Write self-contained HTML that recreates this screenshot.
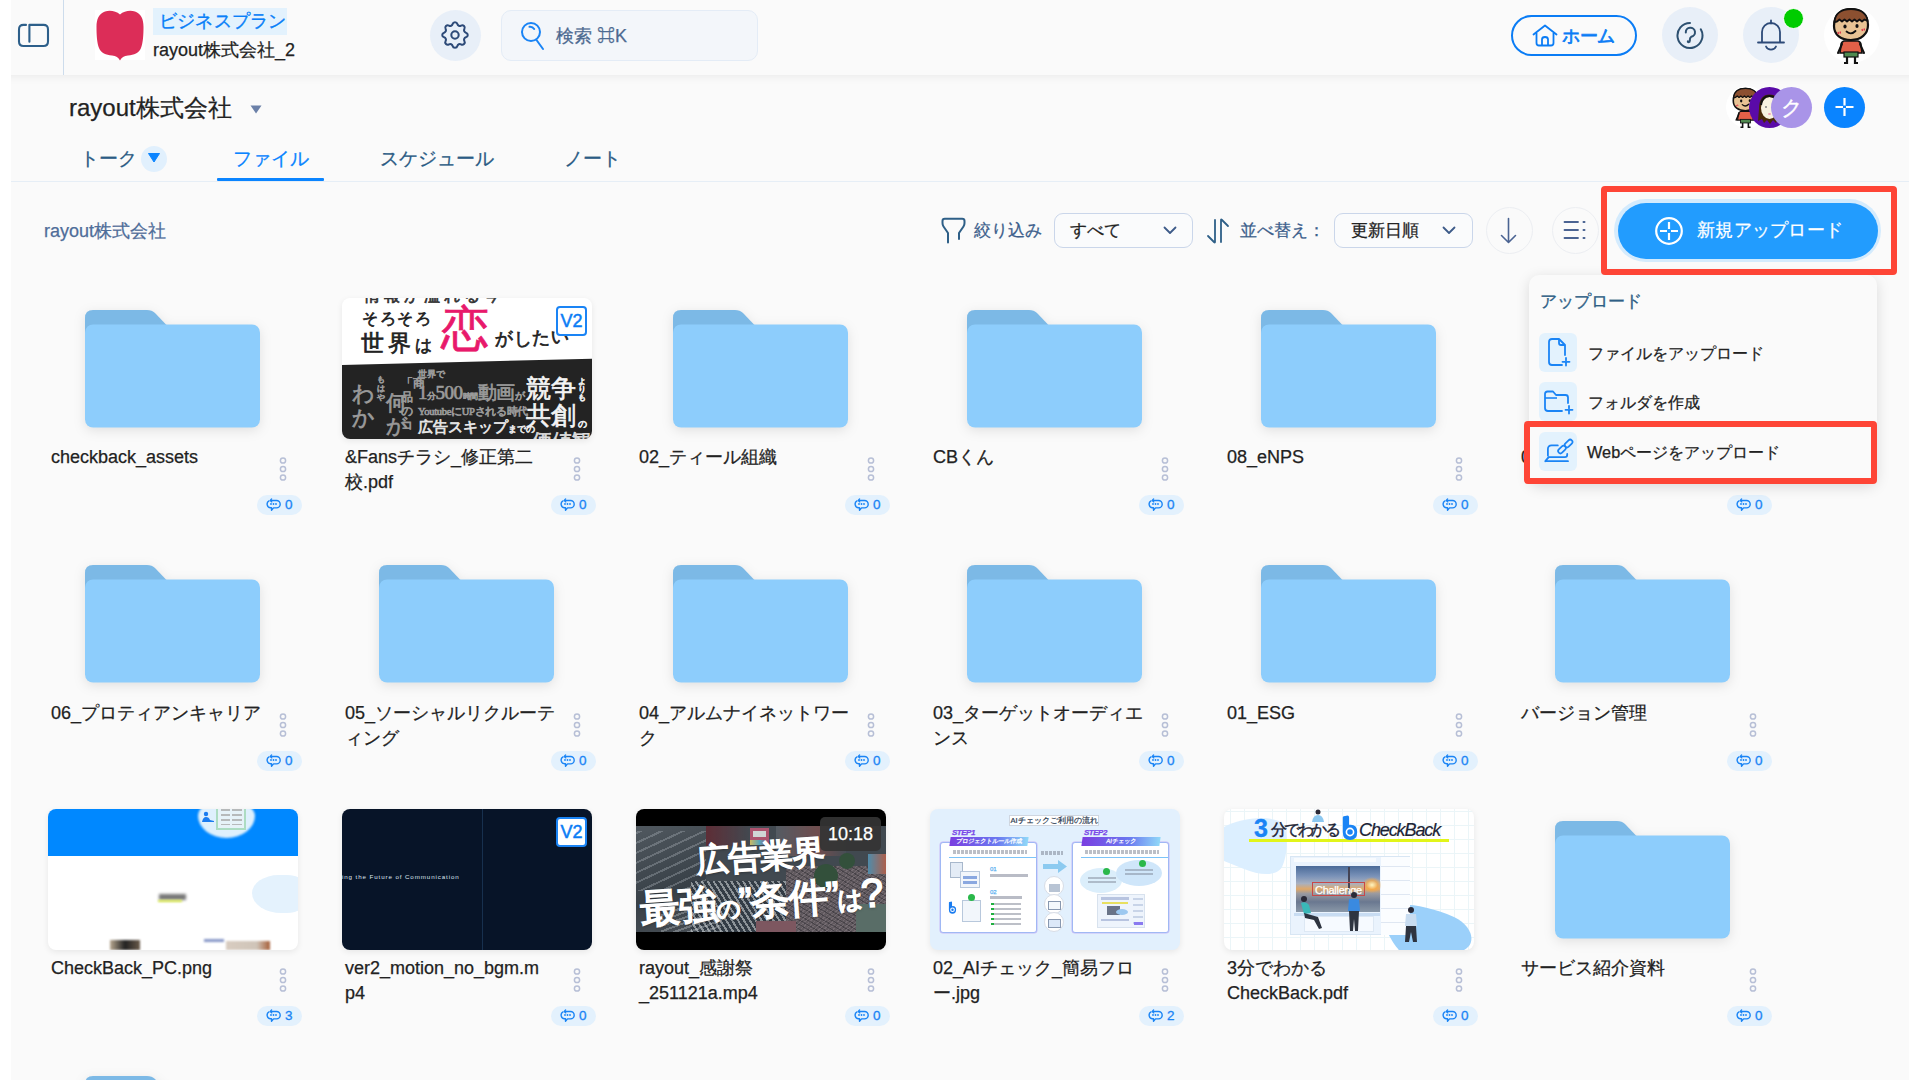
<!DOCTYPE html><html lang="ja"><head><meta charset="utf-8"><title>files</title><style>
*{box-sizing:border-box;margin:0;padding:0}
html,body{width:1920px;height:1080px;overflow:hidden;background:#fff}
body{font-family:"Liberation Sans",sans-serif;color:#222;position:relative;-webkit-text-stroke:0.25px currentColor}
.app{position:absolute;left:0;top:0;width:1920px;height:1080px;background:#fafafa;overflow:hidden}
.edge{position:absolute;top:0;width:11px;height:1080px;background:#fff;z-index:100}
.abs{position:absolute}
.hdr{position:absolute;left:0;top:0;width:1920px;height:75px;background:#fafafa;box-shadow:0 1px 0 #f0f0f0,0 3px 8px rgba(0,0,0,.05);z-index:2}
.fold{position:absolute;filter:drop-shadow(0 3px 6px rgba(0,0,0,.10))}
.th{position:absolute;width:250px;height:141px;border-radius:8px;overflow:hidden;box-shadow:0 2px 6px rgba(0,0,0,.08)}
.ttl{position:absolute;font-size:18px;line-height:25px;color:#222;white-space:nowrap}
.keb{position:absolute}
.bdg{position:absolute;width:45px;height:20px;border-radius:10px;background:#e3f1fd;display:flex;align-items:center;padding-left:9px;gap:4px}
.bdg svg{display:block}
.bdg span{font-size:13.5px;color:#1a84f5;line-height:20px;-webkit-text-stroke:0.3px #1a84f5}
.v2{position:absolute;right:5px;top:8px;width:31px;height:30px;background:#fff;border:2px solid #1a84f5;border-radius:4px;color:#0a7cf5;font-size:18px;line-height:26px;text-align:center;-webkit-text-stroke:0.5px #0a7cf5}
.fj{position:absolute;white-space:nowrap;color:#222;line-height:1.1;-webkit-text-stroke:0.7px currentColor}
.vt{position:absolute;white-space:nowrap;color:#fff;line-height:1;transform:rotate(-4deg);transform-origin:0 50%;-webkit-text-stroke:1.6px #fff;text-shadow:0 1px 3px rgba(0,0,0,.5)}
.g{color:#9a9a9a}
.aip{position:absolute;width:97px;height:91px;background:#fff;border:1.5px solid #a0b8f4;border-radius:3px;box-shadow:0 0 0 0.5px #c8b8f8}
.aic{position:absolute;left:114px;width:20px;height:20px;border-radius:50%;background:#fff;border:1px solid #d8dde6}
.menu{position:absolute;left:1518px;top:275px;width:348px;height:210px;background:#fafafa;border-radius:10px;box-shadow:0 4px 16px rgba(0,0,0,.12);z-index:5}
.mi{position:absolute;left:10px;width:38px;height:39px;border-radius:6px;background:#e3f2fd}
.mt{position:absolute;left:59px;font-size:16.5px;color:#222;white-space:nowrap;line-height:20px}
.red{position:absolute;border:6px solid #fe4536;border-radius:4px;z-index:6}
</style></head><body><div class="app">
<div class="hdr">
<svg class="abs" style="left:17px;top:23px" width="33" height="25" viewBox="0 0 33 25"><path d="M9 1.9 H6.5 Q2 1.9 2 6.4 V18.5 Q2 23 6.5 23 H26.5 Q31 23 31 18.5 V6.4 Q31 1.9 26.5 1.9 H12.4 V18.8" fill="none" stroke="#2d5f8a" stroke-width="2.1" stroke-linecap="round" stroke-linejoin="round"/></svg>
<div class="abs" style="left:63px;top:0;width:1px;height:75px;background:#cddcec"></div>
<div class="abs" style="left:95px;top:10px;width:50px;height:50px;background:#fff"></div>
<svg class="abs" style="left:95px;top:10px" width="50" height="51" viewBox="0 0 50 51"><path d="M25 4.5 C29 1 35 0 40 1.5 C46 3.5 48.5 9 48.5 17 C48.5 25 48 33 46 38 C44 43 39 45 33 45.5 C29 46 26.5 47.5 25 50.5 C23.5 47.5 21 46 17 45.5 C11 45 6 43 4 38 C2 33 1.5 25 1.5 17 C1.5 9 4 3.5 10 1.5 C15 0 21 1 25 4.5 Z" fill="#dc2d58"/></svg>
<div class="abs" style="left:153px;top:7.5px;width:134px;height:27.5px;background:#e3f2fd"></div>
<div class="abs" style="left:159px;top:9px;font-size:17.5px;line-height:24px;color:#0a80f8;letter-spacing:0.2px;-webkit-text-stroke:0.35px #0a80f8">ビジネスプラン</div>
<div class="abs" style="left:153px;top:38px;font-size:18px;line-height:24px;color:#222">rayout株式会社_2</div>
<div class="abs" style="left:430px;top:10px;width:51px;height:51px;border-radius:50%;background:#e8eff8"></div>
<svg class="abs" style="left:438px;top:18px" width="34" height="34" viewBox="0 0 24 24"><path d="M10.325 4.317c.426-1.756 2.924-1.756 3.35 0a1.724 1.724 0 0 0 2.573 1.066c1.543-.94 3.31.826 2.37 2.37a1.724 1.724 0 0 0 1.065 2.572c1.756.426 1.756 2.924 0 3.35a1.724 1.724 0 0 0-1.066 2.573c.94 1.543-.826 3.31-2.37 2.37a1.724 1.724 0 0 0-2.572 1.065c-.426 1.756-2.924 1.756-3.35 0a1.724 1.724 0 0 0-2.573-1.066c-1.543.94-3.31-.826-2.37-2.37a1.724 1.724 0 0 0-1.065-2.572c-1.756-.426-1.756-2.924 0-3.35a1.724 1.724 0 0 0 1.066-2.573c-.94-1.543.826-3.31 2.37-2.37c1 .608 2.296.07 2.572-1.065z" fill="none" stroke="#2d4a78" stroke-width="1.45" stroke-linejoin="round"/><circle cx="12" cy="12" r="2.6" fill="none" stroke="#2d4a78" stroke-width="1.45"/></svg>
<div class="abs" style="left:501px;top:10px;width:257px;height:51px;border-radius:10px;background:#f3f6fa;border:1px solid #e4ecf6"></div>
<svg class="abs" style="left:520px;top:21px" width="26" height="30" viewBox="0 0 26 30"><circle cx="11" cy="11" r="9" fill="none" stroke="#1a84f5" stroke-width="2"/><path d="M9.5 5.8 A5 5 0 0 1 14.2 8" fill="none" stroke="#1a84f5" stroke-width="2" stroke-linecap="round"/><line x1="16.5" y1="19" x2="23" y2="28" stroke="#1a84f5" stroke-width="2" stroke-linecap="round"/></svg>
<div class="abs" style="left:556px;top:24px;font-size:18px;line-height:24px;color:#4d6a91">検索 ⌘K</div>
<div class="abs" style="left:1511px;top:15px;width:126px;height:41px;border-radius:21px;border:2.5px solid #0a7cf5"></div>
<svg class="abs" style="left:1532px;top:24px" width="26" height="23" viewBox="0 0 26 23"><path d="M1.5 10.5 L13 1.5 L24.5 10.5" fill="none" stroke="#0a7cf5" stroke-width="1.8" stroke-linecap="round" stroke-linejoin="round"/><path d="M4.5 9 V19 Q4.5 21.5 7 21.5 H19 Q21.5 21.5 21.5 19 V9" fill="none" stroke="#0a7cf5" stroke-width="1.8"/><path d="M10 21.5 V15.5 Q10 13 13 13 Q16 13 16 15.5 V21.5" fill="none" stroke="#0a7cf5" stroke-width="1.8"/></svg>
<div class="abs" style="left:1562px;top:24px;font-size:18px;line-height:24px;color:#0a7cf5;letter-spacing:-0.3px;-webkit-text-stroke:0.7px #0a7cf5">ホーム</div>
<div class="abs" style="left:1662px;top:7px;width:56px;height:56px;border-radius:50%;background:#e8eff8"></div>
<svg class="abs" style="left:1675px;top:21px" width="30" height="29" viewBox="0 0 30 29"><path d="M25.8 8.25 A12.5 12.5 0 1 1 15 2" fill="none" stroke="#2d5070" stroke-width="2" stroke-linecap="round"/><path d="M10.8 11.5 A4.6 4.6 0 1 1 16.2 15.8 Q14.9 16.6 14.9 18.3 V19.6 Q14.9 21.2 13.6 21.2 Q12.6 21.2 12.9 20.2" fill="none" stroke="#2d5070" stroke-width="2" stroke-linecap="round" stroke-linejoin="round"/></svg>
<div class="abs" style="left:1743px;top:7px;width:56px;height:56px;border-radius:50%;background:#e8eff8"></div>
<svg class="abs" style="left:1756px;top:19px" width="30" height="33" viewBox="0 0 30 33"><line x1="15" y1="1.5" x2="15" y2="4.5" stroke="#2d4a78" stroke-width="1.8" stroke-linecap="round"/><path d="M6 23 V13 A9 9 0 0 1 24 13 V23" fill="none" stroke="#2d4a78" stroke-width="1.8"/><line x1="2" y1="23.5" x2="28" y2="23.5" stroke="#2d4a78" stroke-width="1.8" stroke-linecap="round"/><path d="M10 27.5 A5.5 5.5 0 0 0 20 27.5" fill="none" stroke="#2d4a78" stroke-width="1.8" stroke-linecap="round"/></svg>
<div class="abs" style="left:1783px;top:8px;width:21px;height:21px;border-radius:50%;background:#00cc00;border:1px solid #fff"></div>
<div class="abs" style="left:1824px;top:7px;width:56px;height:56px;border-radius:50%;background:#fff"></div>
<svg class="abs" style="left:1831px;top:7px" width="40" height="57" viewBox="0 0 40 57"><path d="M3 19 C3 8 10 2 20 2 C30 2 37 8 37 18 C37 27 30 33 20 33 C10 33 3 28 3 19 Z" fill="#e8c394" stroke="#111" stroke-width="2.2"/><path d="M3.5 15 C4 6 11 2 20 2 C29 2 36 6 36.5 14 L33.5 12.5 L31 14.5 L28.5 12.5 L26 14.5 L23.5 12.5 L21 14.5 L18.5 12.5 L16 14.5 L13.5 12.5 L11 14.5 L8.5 12.5 L6 14.5 Z" fill="#8c5030" stroke="#111" stroke-width="1.8" stroke-linejoin="round"/><ellipse cx="14" cy="19.5" rx="1.6" ry="2" fill="#111"/><ellipse cx="26" cy="19" rx="1.6" ry="2" fill="#111"/><path d="M15.5 24.5 Q20 28.5 24.5 24" fill="none" stroke="#111" stroke-width="1.8" stroke-linecap="round"/><path d="M7 25 L7.5 27 M9 24.5 L9.5 26.5 M31 22 L31.5 24 M33 21.5 L33.5 23.5" stroke="#e03048" stroke-width="1.3"/><path d="M13 34 H27 Q30 35 30 38 L31 46 H9 L10 38 Q10 35 13 34 Z" fill="#e26048" stroke="#111" stroke-width="1.6"/><path d="M11 37 L7 46 M29 37 L33 46" stroke="#111" stroke-width="2" stroke-linecap="round"/><rect x="13" y="45" width="14" height="5" fill="#4f8a50" stroke="#111" stroke-width="1.2"/><path d="M16 50 V56 H13 M24 50 V56 H27" fill="none" stroke="#111" stroke-width="2.2"/></svg>
</div>

<div class="abs" style="left:69px;top:93px;font-size:24px;line-height:30px;color:#222">rayout株式会社</div>
<svg class="abs" style="left:250px;top:105px" width="12" height="9" viewBox="0 0 12 9"><path d="M0.5 0.5 H11.5 L6 8.5 Z" fill="#6b80a8"/></svg>
<div class="abs" style="left:1726px;top:86px;width:42px;height:42px;border-radius:50%;background:#fff"></div>
<svg class="abs" style="left:1731px;top:87px" width="29" height="41" viewBox="0 0 40 57"><path d="M3 19 C3 8 10 2 20 2 C30 2 37 8 37 18 C37 27 30 33 20 33 C10 33 3 28 3 19 Z" fill="#e8c394" stroke="#111" stroke-width="2.2"/><path d="M3.5 15 C4 6 11 2 20 2 C29 2 36 6 36.5 14 L33.5 12.5 L31 14.5 L28.5 12.5 L26 14.5 L23.5 12.5 L21 14.5 L18.5 12.5 L16 14.5 L13.5 12.5 L11 14.5 L8.5 12.5 L6 14.5 Z" fill="#8c5030" stroke="#111" stroke-width="1.8" stroke-linejoin="round"/><ellipse cx="14" cy="19.5" rx="1.6" ry="2" fill="#111"/><ellipse cx="26" cy="19" rx="1.6" ry="2" fill="#111"/><path d="M15.5 24.5 Q20 28.5 24.5 24" fill="none" stroke="#111" stroke-width="1.8" stroke-linecap="round"/><path d="M7 25 L7.5 27 M9 24.5 L9.5 26.5 M31 22 L31.5 24 M33 21.5 L33.5 23.5" stroke="#e03048" stroke-width="1.3"/><path d="M13 34 H27 Q30 35 30 38 L31 46 H9 L10 38 Q10 35 13 34 Z" fill="#e26048" stroke="#111" stroke-width="1.6"/><path d="M11 37 L7 46 M29 37 L33 46" stroke="#111" stroke-width="2" stroke-linecap="round"/><rect x="13" y="45" width="14" height="5" fill="#4f8a50" stroke="#111" stroke-width="1.2"/><path d="M16 50 V56 H13 M24 50 V56 H27" fill="none" stroke="#111" stroke-width="2.2"/></svg>
<svg class="abs" style="left:1749px;top:87px" width="41" height="41" viewBox="0 0 41 41"><circle cx="20.5" cy="20.5" r="20.5" fill="#5a0aa8"/><path d="M9 34 L10 22 C10 12 14 7.5 20.5 7.5 C27 7.5 31 12 31 22 L32 34 L29 32 L27 36 L24 33 L21 37 L18 33 L15 36 L13 32 Z" fill="#4a2a08"/><ellipse cx="20.5" cy="21" rx="8.5" ry="11" fill="#f8f2e0"/><path d="M12 18 C13 11 17 9 20.5 9 C25 9 28 12 29 17" fill="none" stroke="#111" stroke-width="2"/><circle cx="17" cy="20" r="0.9" fill="#777"/><circle cx="24" cy="20" r="0.9" fill="#777"/><ellipse cx="20.5" cy="27" rx="1.5" ry="1" fill="#f0a0b0"/></svg>
<div class="abs" style="left:1771px;top:87px;width:41px;height:41px;border-radius:50%;background:#a994e8;color:#fff;font-size:21px;line-height:41px;text-align:center;-webkit-text-stroke:0.4px #fff">ク</div>
<div class="abs" style="left:1824px;top:87px;width:41px;height:41px;border-radius:50%;background:#0a84ff"></div>
<svg class="abs" style="left:1834px;top:97px" width="21" height="21" viewBox="0 0 21 21"><path d="M10.5 1 V8.5 M10.5 11 V19 M1.5 10 H9 M12 10 H19.5" stroke="#fff" stroke-width="2.2"/></svg>
<div class="abs" style="left:80px;top:146.5px;font-size:19px;line-height:24px;color:#2b5b84">トーク</div>
<div class="abs" style="left:141px;top:145.5px;width:26px;height:26px;border-radius:50%;background:#e1f0fd"></div>
<svg class="abs" style="left:148px;top:153px" width="12" height="10" viewBox="0 0 12 10"><path d="M0.5 0.5 H11.5 L6 9 Z" fill="#0a84ff" stroke="#0a84ff" stroke-linejoin="round"/></svg>
<div class="abs" style="left:233px;top:146.5px;font-size:19px;line-height:24px;color:#0a84ff">ファイル</div>
<div class="abs" style="left:380px;top:146.5px;font-size:19px;line-height:24px;color:#2b5b84">スケジュール</div>
<div class="abs" style="left:564px;top:146.5px;font-size:19px;line-height:24px;color:#2b5b84">ノート</div>
<div class="abs" style="left:11px;top:181px;width:1898px;height:1px;background:#e6eef6"></div>
<div class="abs" style="left:217px;top:178px;width:107px;height:3px;background:#0a84ff;border-radius:1px"></div>
<div class="abs" style="left:44px;top:219px;font-size:18px;line-height:24px;color:#4f6d99">rayout株式会社</div>
<svg class="abs" style="left:941px;top:217px" width="25" height="27" viewBox="0 0 25 27"><path d="M7 25.5 V16 L2.5 9.5 Q1.5 8 1.5 6 V4 Q1.5 1.8 3.8 1.8 H21.2 Q23.5 1.8 23.5 4 V6 Q23.5 8 22.5 9.5 L18 16 V22" fill="none" stroke="#2e5f87" stroke-width="2" stroke-linecap="round" stroke-linejoin="round"/></svg>
<div class="abs" style="left:974px;top:219px;font-size:17px;line-height:24px;color:#3d5f8c">絞り込み</div>
<div class="abs" style="left:1054px;top:213px;width:139px;height:35px;border-radius:9px;border:1.2px solid #cad6ea;background:#fafbfc"></div>
<div class="abs" style="left:1070px;top:219px;font-size:17px;line-height:24px;color:#222">すべて</div>
<svg class="abs" style="left:1163px;top:226px" width="14" height="9" viewBox="0 0 14 9"><path d="M1.5 1.5 L7 7 L12.5 1.5" fill="none" stroke="#3d5a88" stroke-width="1.8" stroke-linecap="round" stroke-linejoin="round"/></svg>
<svg class="abs" style="left:1205px;top:218px" width="26" height="26" viewBox="0 0 26 26"><path d="M10 2 V24 Q10 25 9 24 L3 18" fill="none" stroke="#2e5f87" stroke-width="1.8" stroke-linecap="round" stroke-linejoin="round"/><path d="M16 24 V2 Q16 1 17 2 L23 8" fill="none" stroke="#2e5f87" stroke-width="1.8" stroke-linecap="round" stroke-linejoin="round"/></svg>
<div class="abs" style="left:1240px;top:219px;font-size:17px;line-height:24px;color:#3d5f8c">並べ替え：</div>
<div class="abs" style="left:1334px;top:213px;width:139px;height:35px;border-radius:9px;border:1.2px solid #cad6ea;background:#fafbfc"></div>
<div class="abs" style="left:1351px;top:219px;font-size:17px;line-height:24px;color:#222">更新日順</div>
<svg class="abs" style="left:1442px;top:226px" width="14" height="9" viewBox="0 0 14 9"><path d="M1.5 1.5 L7 7 L12.5 1.5" fill="none" stroke="#3d5a88" stroke-width="1.8" stroke-linecap="round" stroke-linejoin="round"/></svg>
<div class="abs" style="left:1485.5px;top:207px;width:47px;height:47px;border-radius:50%;border:1px solid #eceef2;background:#fafafa"></div>
<svg class="abs" style="left:1499px;top:217px" width="20" height="27" viewBox="0 0 20 27"><path d="M9.5 1.5 V25 M2.5 18.5 L9.5 25.5 L16.5 18.5" fill="none" stroke="#4a6392" stroke-width="1.6" stroke-linecap="round" stroke-linejoin="round"/></svg>
<div class="abs" style="left:1551.5px;top:207px;width:47px;height:47px;border-radius:50%;border:1px solid #eceef2;background:#fafafa"></div>
<svg class="abs" style="left:1563px;top:220px" width="24" height="20" viewBox="0 0 24 20"><path d="M1.5 2 H15 M1.5 10 H15 M1.5 18 H15" stroke="#4a6392" stroke-width="1.8" stroke-linecap="round"/><path d="M20.5 2 H21.5 M20.5 10 H21.5 M20.5 18 H21.5" stroke="#4a6392" stroke-width="2" stroke-linecap="round"/></svg>
<div class="abs" style="left:1614px;top:199px;width:267px;height:63px;border-radius:32px;background:#d4ebfd"></div>
<div class="abs" style="left:1617.5px;top:202.5px;width:260px;height:56px;border-radius:28px;background:#229cfe"></div>
<svg class="abs" style="left:1654px;top:216px" width="30" height="30" viewBox="0 0 30 30"><circle cx="15" cy="15" r="12.8" fill="none" stroke="#fff" stroke-width="2.2"/><path d="M15 6 V13 M15 17 V24 M6 15 H13 M17 15 H24" stroke="#fff" stroke-width="2.2"/></svg>
<div class="abs" style="left:1697px;top:218px;font-size:18px;line-height:24px;color:#fff;letter-spacing:0.3px">新規アップロード</div>
<div class="red" style="left:1601px;top:186px;width:296px;height:89px"></div>

<svg class="fold" style="left:85px;top:309.5px" width="175" height="118" viewBox="0 0 175 118">
<path d="M0 8 Q0 0 8 0 H62 Q67 0 70 3 L81 14.5 V30 H0 Z" fill="#7cb9e6"/>
<rect x="0" y="14.5" width="175" height="103" rx="8" fill="#8dcdfc"/>
</svg>
<div class="ttl" style="left:51px;top:445px">checkback_assets</div>
<svg class="keb" style="left:277.5px;top:455px" width="10" height="28" viewBox="0 0 10 28">
<circle cx="5" cy="5.5" r="2.6" fill="none" stroke="#b7bfd6" stroke-width="1.5"/>
<circle cx="5" cy="14" r="2.6" fill="none" stroke="#b7bfd6" stroke-width="1.5"/>
<circle cx="5" cy="22.5" r="2.6" fill="none" stroke="#b7bfd6" stroke-width="1.5"/>
</svg>
<div class="bdg" style="left:257px;top:495px"><svg width="15" height="14" viewBox="0 0 15 14"><path d="M5 2.5 H10.5 A3.7 3.7 0 0 1 10.5 9.9 H7.5 L5.5 12.3 V9.8 H4.5 A3.7 3.7 0 0 1 3 2.9" fill="none" stroke="#1a84f5" stroke-width="1.4" stroke-linejoin="round" stroke-linecap="round"/><path d="M5.6 0.9 L4.3 2.5 L5.8 3.9" fill="none" stroke="#1a84f5" stroke-width="1.3" stroke-linecap="round" stroke-linejoin="round"/><circle cx="5" cy="6" r="0.9" fill="#1a84f5"/><circle cx="7.5" cy="6" r="0.9" fill="#1a84f5"/><circle cx="10" cy="6" r="0.9" fill="#1a84f5"/></svg><span>0</span></div>
<div class="th" style="left:342px;top:298px;background:#fff">
<div style="position:absolute;left:0;top:0;width:250px;height:141px;overflow:hidden">
<div style="position:absolute;left:-5px;top:67px;width:270px;height:100px;background:#232323;transform:rotate(-1.4deg);transform-origin:0 0"></div>
<div class="fj" style="left:22px;top:-11px;font-size:16px;color:#333;letter-spacing:4px">情報が溢れる今</div>
<div class="fj" style="left:20px;top:12px;font-size:16px;letter-spacing:1.5px">そろそろ</div>
<div class="fj" style="left:19px;top:33px;font-size:23px;letter-spacing:4px">世界<span style="font-size:17px">は</span></div>
<div class="fj" style="left:99px;top:7px;font-size:48px;color:#e8196b;line-height:48px">恋</div>
<div class="fj" style="left:153px;top:31px;font-size:18px;transform:rotate(-2deg);letter-spacing:0.5px">がしたい</div>
<div class="fj g" style="left:10px;top:84px;font-size:22px;line-height:24px">わ<br>か</div>
<div class="fj g" style="left:35px;top:77px;font-size:8px;width:10px;line-height:9px;white-space:normal">もはや</div>
<div class="fj g" style="left:44px;top:93px;font-size:21px;line-height:23px">何<br>が</div>
<div class="fj g" style="left:59px;top:78px;font-size:12px;line-height:14px;width:13px;white-space:normal">「商品のコ</div>
<div class="fj g" style="left:76px;top:72px;font-size:9px">世界で</div>
<div class="fj g" style="left:76px;top:85px;font-size:19px;font-family:'Liberation Serif',serif;letter-spacing:-0.5px">1<span style="font-size:9px">分</span>500<span style="font-size:8px">時間</span>動画<span style="font-size:10px">が</span></div>
<div class="fj g" style="left:76px;top:108px;font-size:10.5px;font-family:'Liberation Serif',serif;letter-spacing:-0.3px">YoutubeにUPされる時代</div>
<div class="fj" style="left:76px;top:121px;font-size:15px;color:#e8e8e8">広告スキップ<span style="font-size:9px">までの</span></div>
<div class="fj" style="left:184px;top:77px;font-size:25px;color:#f4f4f4;line-height:27px">競争<br>共創</div>
<div class="fj" style="left:236px;top:80px;font-size:8px;color:#eee;width:9px;line-height:8px;white-space:normal">よりも</div>
<div class="fj" style="left:236px;top:122px;font-size:9px;color:#eee">の</div>
<div class="fj" style="left:190px;top:132px;font-size:20px;color:#ddd">価値観</div>
</div><div class="v2">V2</div></div>
<div class="ttl" style="left:345px;top:445px">&amp;Fansチラシ_修正第二<br>校.pdf</div>
<svg class="keb" style="left:571.5px;top:455px" width="10" height="28" viewBox="0 0 10 28">
<circle cx="5" cy="5.5" r="2.6" fill="none" stroke="#b7bfd6" stroke-width="1.5"/>
<circle cx="5" cy="14" r="2.6" fill="none" stroke="#b7bfd6" stroke-width="1.5"/>
<circle cx="5" cy="22.5" r="2.6" fill="none" stroke="#b7bfd6" stroke-width="1.5"/>
</svg>
<div class="bdg" style="left:551px;top:495px"><svg width="15" height="14" viewBox="0 0 15 14"><path d="M5 2.5 H10.5 A3.7 3.7 0 0 1 10.5 9.9 H7.5 L5.5 12.3 V9.8 H4.5 A3.7 3.7 0 0 1 3 2.9" fill="none" stroke="#1a84f5" stroke-width="1.4" stroke-linejoin="round" stroke-linecap="round"/><path d="M5.6 0.9 L4.3 2.5 L5.8 3.9" fill="none" stroke="#1a84f5" stroke-width="1.3" stroke-linecap="round" stroke-linejoin="round"/><circle cx="5" cy="6" r="0.9" fill="#1a84f5"/><circle cx="7.5" cy="6" r="0.9" fill="#1a84f5"/><circle cx="10" cy="6" r="0.9" fill="#1a84f5"/></svg><span>0</span></div>
<svg class="fold" style="left:673px;top:309.5px" width="175" height="118" viewBox="0 0 175 118">
<path d="M0 8 Q0 0 8 0 H62 Q67 0 70 3 L81 14.5 V30 H0 Z" fill="#7cb9e6"/>
<rect x="0" y="14.5" width="175" height="103" rx="8" fill="#8dcdfc"/>
</svg>
<div class="ttl" style="left:639px;top:445px">02_ティール組織</div>
<svg class="keb" style="left:865.5px;top:455px" width="10" height="28" viewBox="0 0 10 28">
<circle cx="5" cy="5.5" r="2.6" fill="none" stroke="#b7bfd6" stroke-width="1.5"/>
<circle cx="5" cy="14" r="2.6" fill="none" stroke="#b7bfd6" stroke-width="1.5"/>
<circle cx="5" cy="22.5" r="2.6" fill="none" stroke="#b7bfd6" stroke-width="1.5"/>
</svg>
<div class="bdg" style="left:845px;top:495px"><svg width="15" height="14" viewBox="0 0 15 14"><path d="M5 2.5 H10.5 A3.7 3.7 0 0 1 10.5 9.9 H7.5 L5.5 12.3 V9.8 H4.5 A3.7 3.7 0 0 1 3 2.9" fill="none" stroke="#1a84f5" stroke-width="1.4" stroke-linejoin="round" stroke-linecap="round"/><path d="M5.6 0.9 L4.3 2.5 L5.8 3.9" fill="none" stroke="#1a84f5" stroke-width="1.3" stroke-linecap="round" stroke-linejoin="round"/><circle cx="5" cy="6" r="0.9" fill="#1a84f5"/><circle cx="7.5" cy="6" r="0.9" fill="#1a84f5"/><circle cx="10" cy="6" r="0.9" fill="#1a84f5"/></svg><span>0</span></div>
<svg class="fold" style="left:967px;top:309.5px" width="175" height="118" viewBox="0 0 175 118">
<path d="M0 8 Q0 0 8 0 H62 Q67 0 70 3 L81 14.5 V30 H0 Z" fill="#7cb9e6"/>
<rect x="0" y="14.5" width="175" height="103" rx="8" fill="#8dcdfc"/>
</svg>
<div class="ttl" style="left:933px;top:445px">CBくん</div>
<svg class="keb" style="left:1159.5px;top:455px" width="10" height="28" viewBox="0 0 10 28">
<circle cx="5" cy="5.5" r="2.6" fill="none" stroke="#b7bfd6" stroke-width="1.5"/>
<circle cx="5" cy="14" r="2.6" fill="none" stroke="#b7bfd6" stroke-width="1.5"/>
<circle cx="5" cy="22.5" r="2.6" fill="none" stroke="#b7bfd6" stroke-width="1.5"/>
</svg>
<div class="bdg" style="left:1139px;top:495px"><svg width="15" height="14" viewBox="0 0 15 14"><path d="M5 2.5 H10.5 A3.7 3.7 0 0 1 10.5 9.9 H7.5 L5.5 12.3 V9.8 H4.5 A3.7 3.7 0 0 1 3 2.9" fill="none" stroke="#1a84f5" stroke-width="1.4" stroke-linejoin="round" stroke-linecap="round"/><path d="M5.6 0.9 L4.3 2.5 L5.8 3.9" fill="none" stroke="#1a84f5" stroke-width="1.3" stroke-linecap="round" stroke-linejoin="round"/><circle cx="5" cy="6" r="0.9" fill="#1a84f5"/><circle cx="7.5" cy="6" r="0.9" fill="#1a84f5"/><circle cx="10" cy="6" r="0.9" fill="#1a84f5"/></svg><span>0</span></div>
<svg class="fold" style="left:1261px;top:309.5px" width="175" height="118" viewBox="0 0 175 118">
<path d="M0 8 Q0 0 8 0 H62 Q67 0 70 3 L81 14.5 V30 H0 Z" fill="#7cb9e6"/>
<rect x="0" y="14.5" width="175" height="103" rx="8" fill="#8dcdfc"/>
</svg>
<div class="ttl" style="left:1227px;top:445px">08_eNPS</div>
<svg class="keb" style="left:1453.5px;top:455px" width="10" height="28" viewBox="0 0 10 28">
<circle cx="5" cy="5.5" r="2.6" fill="none" stroke="#b7bfd6" stroke-width="1.5"/>
<circle cx="5" cy="14" r="2.6" fill="none" stroke="#b7bfd6" stroke-width="1.5"/>
<circle cx="5" cy="22.5" r="2.6" fill="none" stroke="#b7bfd6" stroke-width="1.5"/>
</svg>
<div class="bdg" style="left:1433px;top:495px"><svg width="15" height="14" viewBox="0 0 15 14"><path d="M5 2.5 H10.5 A3.7 3.7 0 0 1 10.5 9.9 H7.5 L5.5 12.3 V9.8 H4.5 A3.7 3.7 0 0 1 3 2.9" fill="none" stroke="#1a84f5" stroke-width="1.4" stroke-linejoin="round" stroke-linecap="round"/><path d="M5.6 0.9 L4.3 2.5 L5.8 3.9" fill="none" stroke="#1a84f5" stroke-width="1.3" stroke-linecap="round" stroke-linejoin="round"/><circle cx="5" cy="6" r="0.9" fill="#1a84f5"/><circle cx="7.5" cy="6" r="0.9" fill="#1a84f5"/><circle cx="10" cy="6" r="0.9" fill="#1a84f5"/></svg><span>0</span></div>
<svg class="fold" style="left:1555px;top:309.5px" width="175" height="118" viewBox="0 0 175 118">
<path d="M0 8 Q0 0 8 0 H62 Q67 0 70 3 L81 14.5 V30 H0 Z" fill="#7cb9e6"/>
<rect x="0" y="14.5" width="175" height="103" rx="8" fill="#8dcdfc"/>
</svg>
<div class="ttl" style="left:1521px;top:445px">07_インナーブランディング</div>
<svg class="keb" style="left:1747.5px;top:455px" width="10" height="28" viewBox="0 0 10 28">
<circle cx="5" cy="5.5" r="2.6" fill="none" stroke="#b7bfd6" stroke-width="1.5"/>
<circle cx="5" cy="14" r="2.6" fill="none" stroke="#b7bfd6" stroke-width="1.5"/>
<circle cx="5" cy="22.5" r="2.6" fill="none" stroke="#b7bfd6" stroke-width="1.5"/>
</svg>
<div class="bdg" style="left:1727px;top:495px"><svg width="15" height="14" viewBox="0 0 15 14"><path d="M5 2.5 H10.5 A3.7 3.7 0 0 1 10.5 9.9 H7.5 L5.5 12.3 V9.8 H4.5 A3.7 3.7 0 0 1 3 2.9" fill="none" stroke="#1a84f5" stroke-width="1.4" stroke-linejoin="round" stroke-linecap="round"/><path d="M5.6 0.9 L4.3 2.5 L5.8 3.9" fill="none" stroke="#1a84f5" stroke-width="1.3" stroke-linecap="round" stroke-linejoin="round"/><circle cx="5" cy="6" r="0.9" fill="#1a84f5"/><circle cx="7.5" cy="6" r="0.9" fill="#1a84f5"/><circle cx="10" cy="6" r="0.9" fill="#1a84f5"/></svg><span>0</span></div>
<svg class="fold" style="left:85px;top:565.0px" width="175" height="118" viewBox="0 0 175 118">
<path d="M0 8 Q0 0 8 0 H62 Q67 0 70 3 L81 14.5 V30 H0 Z" fill="#7cb9e6"/>
<rect x="0" y="14.5" width="175" height="103" rx="8" fill="#8dcdfc"/>
</svg>
<div class="ttl" style="left:51px;top:700.5px">06_プロティアンキャリア</div>
<svg class="keb" style="left:277.5px;top:710.5px" width="10" height="28" viewBox="0 0 10 28">
<circle cx="5" cy="5.5" r="2.6" fill="none" stroke="#b7bfd6" stroke-width="1.5"/>
<circle cx="5" cy="14" r="2.6" fill="none" stroke="#b7bfd6" stroke-width="1.5"/>
<circle cx="5" cy="22.5" r="2.6" fill="none" stroke="#b7bfd6" stroke-width="1.5"/>
</svg>
<div class="bdg" style="left:257px;top:750.5px"><svg width="15" height="14" viewBox="0 0 15 14"><path d="M5 2.5 H10.5 A3.7 3.7 0 0 1 10.5 9.9 H7.5 L5.5 12.3 V9.8 H4.5 A3.7 3.7 0 0 1 3 2.9" fill="none" stroke="#1a84f5" stroke-width="1.4" stroke-linejoin="round" stroke-linecap="round"/><path d="M5.6 0.9 L4.3 2.5 L5.8 3.9" fill="none" stroke="#1a84f5" stroke-width="1.3" stroke-linecap="round" stroke-linejoin="round"/><circle cx="5" cy="6" r="0.9" fill="#1a84f5"/><circle cx="7.5" cy="6" r="0.9" fill="#1a84f5"/><circle cx="10" cy="6" r="0.9" fill="#1a84f5"/></svg><span>0</span></div>
<svg class="fold" style="left:379px;top:565.0px" width="175" height="118" viewBox="0 0 175 118">
<path d="M0 8 Q0 0 8 0 H62 Q67 0 70 3 L81 14.5 V30 H0 Z" fill="#7cb9e6"/>
<rect x="0" y="14.5" width="175" height="103" rx="8" fill="#8dcdfc"/>
</svg>
<div class="ttl" style="left:345px;top:700.5px">05_ソーシャルリクルーテ<br>ィング</div>
<svg class="keb" style="left:571.5px;top:710.5px" width="10" height="28" viewBox="0 0 10 28">
<circle cx="5" cy="5.5" r="2.6" fill="none" stroke="#b7bfd6" stroke-width="1.5"/>
<circle cx="5" cy="14" r="2.6" fill="none" stroke="#b7bfd6" stroke-width="1.5"/>
<circle cx="5" cy="22.5" r="2.6" fill="none" stroke="#b7bfd6" stroke-width="1.5"/>
</svg>
<div class="bdg" style="left:551px;top:750.5px"><svg width="15" height="14" viewBox="0 0 15 14"><path d="M5 2.5 H10.5 A3.7 3.7 0 0 1 10.5 9.9 H7.5 L5.5 12.3 V9.8 H4.5 A3.7 3.7 0 0 1 3 2.9" fill="none" stroke="#1a84f5" stroke-width="1.4" stroke-linejoin="round" stroke-linecap="round"/><path d="M5.6 0.9 L4.3 2.5 L5.8 3.9" fill="none" stroke="#1a84f5" stroke-width="1.3" stroke-linecap="round" stroke-linejoin="round"/><circle cx="5" cy="6" r="0.9" fill="#1a84f5"/><circle cx="7.5" cy="6" r="0.9" fill="#1a84f5"/><circle cx="10" cy="6" r="0.9" fill="#1a84f5"/></svg><span>0</span></div>
<svg class="fold" style="left:673px;top:565.0px" width="175" height="118" viewBox="0 0 175 118">
<path d="M0 8 Q0 0 8 0 H62 Q67 0 70 3 L81 14.5 V30 H0 Z" fill="#7cb9e6"/>
<rect x="0" y="14.5" width="175" height="103" rx="8" fill="#8dcdfc"/>
</svg>
<div class="ttl" style="left:639px;top:700.5px">04_アルムナイネットワー<br>ク</div>
<svg class="keb" style="left:865.5px;top:710.5px" width="10" height="28" viewBox="0 0 10 28">
<circle cx="5" cy="5.5" r="2.6" fill="none" stroke="#b7bfd6" stroke-width="1.5"/>
<circle cx="5" cy="14" r="2.6" fill="none" stroke="#b7bfd6" stroke-width="1.5"/>
<circle cx="5" cy="22.5" r="2.6" fill="none" stroke="#b7bfd6" stroke-width="1.5"/>
</svg>
<div class="bdg" style="left:845px;top:750.5px"><svg width="15" height="14" viewBox="0 0 15 14"><path d="M5 2.5 H10.5 A3.7 3.7 0 0 1 10.5 9.9 H7.5 L5.5 12.3 V9.8 H4.5 A3.7 3.7 0 0 1 3 2.9" fill="none" stroke="#1a84f5" stroke-width="1.4" stroke-linejoin="round" stroke-linecap="round"/><path d="M5.6 0.9 L4.3 2.5 L5.8 3.9" fill="none" stroke="#1a84f5" stroke-width="1.3" stroke-linecap="round" stroke-linejoin="round"/><circle cx="5" cy="6" r="0.9" fill="#1a84f5"/><circle cx="7.5" cy="6" r="0.9" fill="#1a84f5"/><circle cx="10" cy="6" r="0.9" fill="#1a84f5"/></svg><span>0</span></div>
<svg class="fold" style="left:967px;top:565.0px" width="175" height="118" viewBox="0 0 175 118">
<path d="M0 8 Q0 0 8 0 H62 Q67 0 70 3 L81 14.5 V30 H0 Z" fill="#7cb9e6"/>
<rect x="0" y="14.5" width="175" height="103" rx="8" fill="#8dcdfc"/>
</svg>
<div class="ttl" style="left:933px;top:700.5px">03_ターゲットオーディエ<br>ンス</div>
<svg class="keb" style="left:1159.5px;top:710.5px" width="10" height="28" viewBox="0 0 10 28">
<circle cx="5" cy="5.5" r="2.6" fill="none" stroke="#b7bfd6" stroke-width="1.5"/>
<circle cx="5" cy="14" r="2.6" fill="none" stroke="#b7bfd6" stroke-width="1.5"/>
<circle cx="5" cy="22.5" r="2.6" fill="none" stroke="#b7bfd6" stroke-width="1.5"/>
</svg>
<div class="bdg" style="left:1139px;top:750.5px"><svg width="15" height="14" viewBox="0 0 15 14"><path d="M5 2.5 H10.5 A3.7 3.7 0 0 1 10.5 9.9 H7.5 L5.5 12.3 V9.8 H4.5 A3.7 3.7 0 0 1 3 2.9" fill="none" stroke="#1a84f5" stroke-width="1.4" stroke-linejoin="round" stroke-linecap="round"/><path d="M5.6 0.9 L4.3 2.5 L5.8 3.9" fill="none" stroke="#1a84f5" stroke-width="1.3" stroke-linecap="round" stroke-linejoin="round"/><circle cx="5" cy="6" r="0.9" fill="#1a84f5"/><circle cx="7.5" cy="6" r="0.9" fill="#1a84f5"/><circle cx="10" cy="6" r="0.9" fill="#1a84f5"/></svg><span>0</span></div>
<svg class="fold" style="left:1261px;top:565.0px" width="175" height="118" viewBox="0 0 175 118">
<path d="M0 8 Q0 0 8 0 H62 Q67 0 70 3 L81 14.5 V30 H0 Z" fill="#7cb9e6"/>
<rect x="0" y="14.5" width="175" height="103" rx="8" fill="#8dcdfc"/>
</svg>
<div class="ttl" style="left:1227px;top:700.5px">01_ESG</div>
<svg class="keb" style="left:1453.5px;top:710.5px" width="10" height="28" viewBox="0 0 10 28">
<circle cx="5" cy="5.5" r="2.6" fill="none" stroke="#b7bfd6" stroke-width="1.5"/>
<circle cx="5" cy="14" r="2.6" fill="none" stroke="#b7bfd6" stroke-width="1.5"/>
<circle cx="5" cy="22.5" r="2.6" fill="none" stroke="#b7bfd6" stroke-width="1.5"/>
</svg>
<div class="bdg" style="left:1433px;top:750.5px"><svg width="15" height="14" viewBox="0 0 15 14"><path d="M5 2.5 H10.5 A3.7 3.7 0 0 1 10.5 9.9 H7.5 L5.5 12.3 V9.8 H4.5 A3.7 3.7 0 0 1 3 2.9" fill="none" stroke="#1a84f5" stroke-width="1.4" stroke-linejoin="round" stroke-linecap="round"/><path d="M5.6 0.9 L4.3 2.5 L5.8 3.9" fill="none" stroke="#1a84f5" stroke-width="1.3" stroke-linecap="round" stroke-linejoin="round"/><circle cx="5" cy="6" r="0.9" fill="#1a84f5"/><circle cx="7.5" cy="6" r="0.9" fill="#1a84f5"/><circle cx="10" cy="6" r="0.9" fill="#1a84f5"/></svg><span>0</span></div>
<svg class="fold" style="left:1555px;top:565.0px" width="175" height="118" viewBox="0 0 175 118">
<path d="M0 8 Q0 0 8 0 H62 Q67 0 70 3 L81 14.5 V30 H0 Z" fill="#7cb9e6"/>
<rect x="0" y="14.5" width="175" height="103" rx="8" fill="#8dcdfc"/>
</svg>
<div class="ttl" style="left:1521px;top:700.5px">バージョン管理</div>
<svg class="keb" style="left:1747.5px;top:710.5px" width="10" height="28" viewBox="0 0 10 28">
<circle cx="5" cy="5.5" r="2.6" fill="none" stroke="#b7bfd6" stroke-width="1.5"/>
<circle cx="5" cy="14" r="2.6" fill="none" stroke="#b7bfd6" stroke-width="1.5"/>
<circle cx="5" cy="22.5" r="2.6" fill="none" stroke="#b7bfd6" stroke-width="1.5"/>
</svg>
<div class="bdg" style="left:1727px;top:750.5px"><svg width="15" height="14" viewBox="0 0 15 14"><path d="M5 2.5 H10.5 A3.7 3.7 0 0 1 10.5 9.9 H7.5 L5.5 12.3 V9.8 H4.5 A3.7 3.7 0 0 1 3 2.9" fill="none" stroke="#1a84f5" stroke-width="1.4" stroke-linejoin="round" stroke-linecap="round"/><path d="M5.6 0.9 L4.3 2.5 L5.8 3.9" fill="none" stroke="#1a84f5" stroke-width="1.3" stroke-linecap="round" stroke-linejoin="round"/><circle cx="5" cy="6" r="0.9" fill="#1a84f5"/><circle cx="7.5" cy="6" r="0.9" fill="#1a84f5"/><circle cx="10" cy="6" r="0.9" fill="#1a84f5"/></svg><span>0</span></div>
<div class="th" style="left:48px;top:809px;background:#fff">
<div style="position:absolute;left:0;top:0;width:250px;height:47px;background:#0088ff"></div>
<div style="position:absolute;left:150px;top:-8px;width:57px;height:37px;background:#def0fd;border-radius:40% 45% 50% 50% / 40% 40% 60% 60%;filter:blur(0.8px)"></div>
<div style="position:absolute;left:168px;top:-4px;width:30px;height:25px;border:2.5px solid #acdcc2;border-top:0;background:#e6f2f8"></div>
<div style="position:absolute;left:173px;top:0;width:21px;height:16px;background:repeating-linear-gradient(180deg,#aaa 0 2px,transparent 2px 5px);filter:blur(0.7px);opacity:.8"></div>
<div style="position:absolute;left:182px;top:0;width:2px;height:18px;background:#e6f2f8"></div>
<svg style="position:absolute;left:153px;top:2px" width="14" height="12" viewBox="0 0 14 12"><circle cx="5" cy="3" r="2.2" fill="#1a7cf0"/><path d="M1 11 Q2 6 5 6 Q8 6 9 9 L13 10 V11 Z" fill="#1a7cf0"/></svg>
<div style="position:absolute;left:204px;top:66px;width:56px;height:38px;background:#e4f2fd;border-radius:50% 40% 40% 55%"></div>
<div style="position:absolute;left:111px;top:85px;width:27px;height:6px;background:#777;filter:blur(1.5px)"></div>
<div style="position:absolute;left:110px;top:91px;width:24px;height:2px;background:#d8ea40;filter:blur(0.8px)"></div>
<div style="position:absolute;left:62px;top:131px;width:30px;height:10px;background:linear-gradient(90deg,#b8a890,#222 50%,#6a5a4a);filter:blur(1.3px)"></div>
<div style="position:absolute;left:178px;top:132px;width:44px;height:9px;background:linear-gradient(90deg,#d8ccc0,#cfc4b8 70%,#a8603a);filter:blur(1.3px)"></div>
<div style="position:absolute;left:156px;top:130px;width:20px;height:3px;background:#8898c8;filter:blur(0.8px)"></div>
</div>
<div class="ttl" style="left:51px;top:956px">CheckBack_PC.png</div>
<svg class="keb" style="left:277.5px;top:966px" width="10" height="28" viewBox="0 0 10 28">
<circle cx="5" cy="5.5" r="2.6" fill="none" stroke="#b7bfd6" stroke-width="1.5"/>
<circle cx="5" cy="14" r="2.6" fill="none" stroke="#b7bfd6" stroke-width="1.5"/>
<circle cx="5" cy="22.5" r="2.6" fill="none" stroke="#b7bfd6" stroke-width="1.5"/>
</svg>
<div class="bdg" style="left:257px;top:1006px"><svg width="15" height="14" viewBox="0 0 15 14"><path d="M5 2.5 H10.5 A3.7 3.7 0 0 1 10.5 9.9 H7.5 L5.5 12.3 V9.8 H4.5 A3.7 3.7 0 0 1 3 2.9" fill="none" stroke="#1a84f5" stroke-width="1.4" stroke-linejoin="round" stroke-linecap="round"/><path d="M5.6 0.9 L4.3 2.5 L5.8 3.9" fill="none" stroke="#1a84f5" stroke-width="1.3" stroke-linecap="round" stroke-linejoin="round"/><circle cx="5" cy="6" r="0.9" fill="#1a84f5"/><circle cx="7.5" cy="6" r="0.9" fill="#1a84f5"/><circle cx="10" cy="6" r="0.9" fill="#1a84f5"/></svg><span>3</span></div>
<div class="th" style="left:342px;top:809px;background:#071428">
<div style="position:absolute;left:140px;top:0;width:1px;height:141px;background:#17304e"></div>
<div style="position:absolute;left:0;top:64px;font-size:6.2px;line-height:8px;color:#dde4ee;white-space:nowrap;letter-spacing:0.9px;-webkit-text-stroke:0">ing the Future of Communication</div>
<div class="v2">V2</div></div>
<div class="ttl" style="left:345px;top:956px">ver2_motion_no_bgm.m<br>p4</div>
<svg class="keb" style="left:571.5px;top:966px" width="10" height="28" viewBox="0 0 10 28">
<circle cx="5" cy="5.5" r="2.6" fill="none" stroke="#b7bfd6" stroke-width="1.5"/>
<circle cx="5" cy="14" r="2.6" fill="none" stroke="#b7bfd6" stroke-width="1.5"/>
<circle cx="5" cy="22.5" r="2.6" fill="none" stroke="#b7bfd6" stroke-width="1.5"/>
</svg>
<div class="bdg" style="left:551px;top:1006px"><svg width="15" height="14" viewBox="0 0 15 14"><path d="M5 2.5 H10.5 A3.7 3.7 0 0 1 10.5 9.9 H7.5 L5.5 12.3 V9.8 H4.5 A3.7 3.7 0 0 1 3 2.9" fill="none" stroke="#1a84f5" stroke-width="1.4" stroke-linejoin="round" stroke-linecap="round"/><path d="M5.6 0.9 L4.3 2.5 L5.8 3.9" fill="none" stroke="#1a84f5" stroke-width="1.3" stroke-linecap="round" stroke-linejoin="round"/><circle cx="5" cy="6" r="0.9" fill="#1a84f5"/><circle cx="7.5" cy="6" r="0.9" fill="#1a84f5"/><circle cx="10" cy="6" r="0.9" fill="#1a84f5"/></svg><span>0</span></div>
<div class="th" style="left:636px;top:809px;background:#000">
<div style="position:absolute;left:0;top:17px;width:250px;height:106px;overflow:hidden;background:#44505a;filter:blur(0.7px) saturate(0.7)">
<div style="position:absolute;left:-10px;top:0;width:80px;height:106px;background:linear-gradient(160deg,#56626c,#3a4650 60%,#4c5660);"></div>
<div style="position:absolute;left:0;top:5px;width:70px;height:60px;background:repeating-linear-gradient(-25deg,rgba(190,200,210,.35) 0 2px,transparent 2px 9px)"></div>
<div style="position:absolute;left:70px;top:0;width:45px;height:20px;background:linear-gradient(90deg,#7a2a38,#44505a)"></div>
<div style="position:absolute;left:114px;top:2px;width:19px;height:12px;background:#e8f0f0;border:3px solid #e2507a"></div>
<div style="position:absolute;left:114px;top:14px;width:19px;height:5px;background:linear-gradient(90deg,#f0d040,#40c0e0,#e04080)"></div>
<div style="position:absolute;left:140px;top:0;width:70px;height:30px;background:linear-gradient(90deg,#5a6470,#8a5050 60%,#4a5560)"></div>
<div style="position:absolute;left:55px;top:55px;width:100px;height:51px;background:repeating-linear-gradient(58deg,rgba(225,232,238,.55) 0 2px,rgba(40,55,70,.6) 2px 5px)"></div>
<div style="position:absolute;left:25px;top:80px;width:60px;height:26px;background:repeating-linear-gradient(-20deg,rgba(225,232,238,.35) 0 2px,transparent 2px 5px)"></div>
<div style="position:absolute;left:150px;top:40px;width:110px;height:70px;background:#6d6068"></div>
<div style="position:absolute;left:150px;top:40px;width:110px;height:70px;background:repeating-linear-gradient(30deg,rgba(20,20,30,.35) 0 1px,transparent 1px 4px),repeating-linear-gradient(-40deg,rgba(200,180,190,.25) 0 1px,transparent 1px 3px)"></div>
<div style="position:absolute;left:178px;top:38px;width:24px;height:24px;border-radius:50%;background:#2d5a38"></div>
<div style="position:absolute;left:203px;top:27px;width:16px;height:16px;border-radius:50%;background:#2d5a38"></div>
<div style="position:absolute;left:232px;top:28px;width:18px;height:20px;background:linear-gradient(90deg,#40a0d0,#e06040)"></div>
<div style="position:absolute;left:220px;top:78px;width:30px;height:28px;background:#5a7a70"></div>
<div style="position:absolute;left:120px;top:95px;width:40px;height:11px;background:#9a5a68"></div>
<div style="position:absolute;left:0;top:0;width:250px;height:106px;background:rgba(25,35,45,.12)"></div>
</div>
<div style="position:absolute;left:184px;top:8px;width:61px;height:34px;background:rgba(52,52,52,.92);border-radius:5px;color:#fff;font-size:18px;line-height:34px;text-align:center">10:18</div>
<div class="vt" style="left:60px;top:35px;font-size:33px;letter-spacing:-1px">広告業界</div>
<div class="vt" style="left:4px;top:80px;font-size:40px;letter-spacing:-2px">最強<span style="font-size:24px">の</span>”条件”<span style="font-size:25px">は</span>?</div>
</div>
<div class="ttl" style="left:639px;top:956px">rayout_感謝祭<br>_251121a.mp4</div>
<svg class="keb" style="left:865.5px;top:966px" width="10" height="28" viewBox="0 0 10 28">
<circle cx="5" cy="5.5" r="2.6" fill="none" stroke="#b7bfd6" stroke-width="1.5"/>
<circle cx="5" cy="14" r="2.6" fill="none" stroke="#b7bfd6" stroke-width="1.5"/>
<circle cx="5" cy="22.5" r="2.6" fill="none" stroke="#b7bfd6" stroke-width="1.5"/>
</svg>
<div class="bdg" style="left:845px;top:1006px"><svg width="15" height="14" viewBox="0 0 15 14"><path d="M5 2.5 H10.5 A3.7 3.7 0 0 1 10.5 9.9 H7.5 L5.5 12.3 V9.8 H4.5 A3.7 3.7 0 0 1 3 2.9" fill="none" stroke="#1a84f5" stroke-width="1.4" stroke-linejoin="round" stroke-linecap="round"/><path d="M5.6 0.9 L4.3 2.5 L5.8 3.9" fill="none" stroke="#1a84f5" stroke-width="1.3" stroke-linecap="round" stroke-linejoin="round"/><circle cx="5" cy="6" r="0.9" fill="#1a84f5"/><circle cx="7.5" cy="6" r="0.9" fill="#1a84f5"/><circle cx="10" cy="6" r="0.9" fill="#1a84f5"/></svg><span>0</span></div>
<div class="th" style="left:930px;top:809px;background:#e2f0fd">
<div style="position:absolute;left:79px;top:6px;width:90px;height:11px;background:#fff;border:1px solid #cfd6e0;font-size:7.5px;line-height:10px;text-align:center;color:#2a3a50;-webkit-text-stroke:0.2px #2a3a50;white-space:nowrap">AIチェックご利用の流れ</div>
<div class="aip" style="left:10px;top:33px"></div>
<div class="aip" style="left:142px;top:33px"></div>
<div style="position:absolute;left:22px;top:19px;font-size:8px;line-height:9px;font-style:italic;font-weight:bold;color:#7a48e8;letter-spacing:-0.5px">STEP1</div>
<div style="position:absolute;left:154px;top:19px;font-size:8px;line-height:9px;font-style:italic;font-weight:bold;color:#7a48e8;letter-spacing:-0.5px">STEP2</div>
<div style="position:absolute;left:20px;top:28px;width:78px;height:9px;background:linear-gradient(90deg,#7a3ee0,#6a78f0 60%,#90d8f8);transform:skewX(-8deg);color:#fff;font-size:6px;line-height:9px;text-align:center;white-space:nowrap">プロジェクトルール作成</div>
<div style="position:absolute;left:152px;top:28px;width:78px;height:9px;background:linear-gradient(90deg,#7a3ee0,#6a78f0 60%,#90d8f8);transform:skewX(-8deg);color:#fff;font-size:6px;line-height:9px;text-align:center;white-space:nowrap">AIチェック</div>
<div style="position:absolute;left:23px;top:41px;width:74px;height:4px;background:repeating-linear-gradient(90deg,#6a7080 0 3px,transparent 3px 4px);opacity:.45"></div>
<div style="position:absolute;left:155px;top:41px;width:74px;height:4px;background:repeating-linear-gradient(90deg,#6a7080 0 3px,transparent 3px 4px);opacity:.45"></div>
<div style="position:absolute;left:19px;top:48px;width:87px;height:1px;background:#7cc4f8"></div>
<div style="position:absolute;left:151px;top:48px;width:87px;height:1px;background:#7cc4f8"></div>
<div style="position:absolute;left:20px;top:53px;width:13px;height:16px;background:#e4ecf6;border:1px solid #a8b8cc"></div>
<div style="position:absolute;left:30px;top:62px;width:20px;height:17px;background:#f2f6fb;border:1px solid #b8c8dc"></div>
<div style="position:absolute;left:33px;top:67px;width:14px;height:3px;background:#8aa8e0"></div>
<div style="position:absolute;left:33px;top:72px;width:14px;height:3px;background:#8aa8e0"></div>
<div style="position:absolute;left:60px;top:57px;font-size:6px;line-height:6px;color:#5ab0f0">01</div>
<div style="position:absolute;left:60px;top:65px;width:38px;height:3px;background:#8a90a0;opacity:.6"></div>
<div style="position:absolute;left:32px;top:91px;width:19px;height:22px;background:#f2f6fb;border:1px solid #b8c8dc"></div>
<div style="position:absolute;left:38px;top:85px;width:7px;height:7px;border-radius:50%;background:#2ab84a"></div>
<div style="position:absolute;left:60px;top:80px;font-size:6px;line-height:6px;color:#5ab0f0">02</div>
<div style="position:absolute;left:60px;top:87px;width:32px;height:3px;background:#8a90a0;opacity:.6"></div>
<div style="position:absolute;left:61px;top:94px;width:30px;height:22px;background:repeating-linear-gradient(180deg,#7a8090 0 2px,transparent 2px 5px);opacity:.5"></div>
<div style="position:absolute;left:61px;top:94px;width:3px;height:22px;background:repeating-linear-gradient(180deg,#20b040 0 2px,transparent 2px 5px)"></div>
<svg style="position:absolute;left:18px;top:90px" width="9" height="17" viewBox="0 0 20 30"><path d="M6 2 Q9 1 9 4 V12 Q18 11 18 20 Q18 29 10 29 Q2 29 2 20 V4 Q2 2 6 2 Z" fill="#1a7cf0"/><circle cx="10" cy="20" r="4" fill="none" stroke="#fff" stroke-width="2.5"/></svg>
<div style="position:absolute;left:111px;top:42px;width:22px;height:4px;background:repeating-linear-gradient(90deg,#6a7080 0 3px,transparent 3px 4px);opacity:.45"></div>
<svg style="position:absolute;left:113px;top:51px" width="25" height="13" viewBox="0 0 25 13"><path d="M0 4 H15 V0 L24 6.5 L15 13 V9 H0 Z" fill="#8ccaf0"/></svg>
<div class="aic" style="top:67px"></div>
<div class="aic" style="top:85px"></div>
<div class="aic" style="top:103px"></div>
<div style="position:absolute;left:119px;top:75px;width:11px;height:8px;background:#b8c4d4"></div>
<div style="position:absolute;left:118px;top:92px;width:13px;height:9px;border:1px solid #8898b0;background:#f4f8fc"></div>
<div style="position:absolute;left:118px;top:110px;width:13px;height:9px;border:1px solid #8898b0;background:#dce8f8"></div>
<div style="position:absolute;left:150px;top:59px;width:42px;height:25px;border-radius:50%;background:#dbeefb"></div>
<div style="position:absolute;left:186px;top:51px;width:46px;height:26px;border-radius:50%;background:#cfe6fa"></div>
<div style="position:absolute;left:173px;top:59px;width:7px;height:7px;border-radius:50%;background:#2ab84a"></div>
<div style="position:absolute;left:209px;top:51px;width:7px;height:7px;border-radius:50%;background:#2ab84a"></div>
<div style="position:absolute;left:158px;top:68px;width:28px;height:6px;background:repeating-linear-gradient(180deg,#6a7080 0 2px,transparent 2px 4px);opacity:.4"></div>
<div style="position:absolute;left:195px;top:60px;width:28px;height:8px;background:repeating-linear-gradient(180deg,#6a7080 0 2px,transparent 2px 4px);opacity:.4"></div>
<div style="position:absolute;left:167px;top:85px;width:48px;height:34px;background:#eef4fc;border:1px solid #d8e2ee"></div>
<div style="position:absolute;left:171px;top:88px;width:28px;height:3px;background:#b8c4e0"></div>
<div style="position:absolute;left:172px;top:93px;width:26px;height:2px;background:#e8e060"></div>
<div style="position:absolute;left:177px;top:97px;width:13px;height:9px;background:#6a7488"></div>
<div style="position:absolute;left:186px;top:100px;width:12px;height:6px;border-radius:50%;background:#9cc8f0"></div>
<div style="position:absolute;left:171px;top:110px;width:28px;height:2px;background:#b8c4e0"></div>
<div style="position:absolute;left:203px;top:89px;width:10px;height:28px;background:repeating-linear-gradient(180deg,#c8d4e8 0 2px,transparent 2px 6px)"></div>
<div style="position:absolute;left:204px;top:113px;width:9px;height:3px;background:#8a7af0"></div>
</div>
<div class="ttl" style="left:933px;top:956px">02_AIチェック_簡易フロ<br>ー.jpg</div>
<svg class="keb" style="left:1159.5px;top:966px" width="10" height="28" viewBox="0 0 10 28">
<circle cx="5" cy="5.5" r="2.6" fill="none" stroke="#b7bfd6" stroke-width="1.5"/>
<circle cx="5" cy="14" r="2.6" fill="none" stroke="#b7bfd6" stroke-width="1.5"/>
<circle cx="5" cy="22.5" r="2.6" fill="none" stroke="#b7bfd6" stroke-width="1.5"/>
</svg>
<div class="bdg" style="left:1139px;top:1006px"><svg width="15" height="14" viewBox="0 0 15 14"><path d="M5 2.5 H10.5 A3.7 3.7 0 0 1 10.5 9.9 H7.5 L5.5 12.3 V9.8 H4.5 A3.7 3.7 0 0 1 3 2.9" fill="none" stroke="#1a84f5" stroke-width="1.4" stroke-linejoin="round" stroke-linecap="round"/><path d="M5.6 0.9 L4.3 2.5 L5.8 3.9" fill="none" stroke="#1a84f5" stroke-width="1.3" stroke-linecap="round" stroke-linejoin="round"/><circle cx="5" cy="6" r="0.9" fill="#1a84f5"/><circle cx="7.5" cy="6" r="0.9" fill="#1a84f5"/><circle cx="10" cy="6" r="0.9" fill="#1a84f5"/></svg><span>2</span></div>
<div class="th" style="left:1224px;top:809px;background-color:#fff;background-image:linear-gradient(#ebf5f8 1px,transparent 1px),linear-gradient(90deg,#ebf5f8 1px,transparent 1px);background-size:14px 14px;background-position:6px 2px">
<svg style="position:absolute;left:0;top:0" width="250" height="141" viewBox="0 0 250 141"><path d="M0 18 C15 10 40 6 55 12 C66 18 64 45 58 58 C52 68 35 66 20 60 L0 52 Z" fill="#dcefff"/><path d="M160 100 C170 92 200 95 230 108 C250 118 252 135 240 141 H175 C165 130 155 108 160 100 Z" fill="#9bd0fa"/></svg>
<div style="position:absolute;left:25px;top:30px;width:200px;height:3px;background:#e2f51a"></div>
<div style="position:absolute;left:30px;top:5px;font-size:25px;line-height:28px;color:#1a84f5;font-weight:bold;-webkit-text-stroke:0.4px #1a84f5">3</div>
<div style="position:absolute;left:47px;top:10px;font-size:16px;line-height:22px;white-space:nowrap;color:#1c2436;letter-spacing:-2.6px;-webkit-text-stroke:0.4px #1c2436">分でわかる</div>
<svg style="position:absolute;left:117px;top:5px" width="18" height="27" viewBox="0 0 20 30"><path d="M6 2 Q9 1 9 4 V12 Q18 11 18 20 Q18 29 10 29 Q2 29 2 20 V4 Q2 2 6 2 Z" fill="#1a84f5"/><circle cx="10" cy="20" r="4" fill="none" stroke="#fff" stroke-width="1.8"/></svg>
<div style="position:absolute;left:135px;top:10px;font-size:18px;line-height:22px;white-space:nowrap;color:#1c2436;font-style:italic;letter-spacing:-1.1px;-webkit-text-stroke:0.2px #1c2436">CheckBack</div>
<div style="position:absolute;left:66px;top:47px;width:120px;height:79px;background:#eaf3fd;border:1px solid #d8e6f4"></div>
<div style="position:absolute;left:70px;top:49px;width:82px;height:4px;background:#f8fbfe"></div>
<div style="position:absolute;left:72px;top:57px;width:84px;height:46px;background:linear-gradient(180deg,#4a6a98 0%,#7a92b8 22%,#a8b0c0 38%,#e0a868 50%,#9a9aa0 60%,#6a7890 78%,#8a98a8 100%)"></div>
<div style="position:absolute;left:138px;top:68px;width:20px;height:16px;border-radius:50%;background:radial-gradient(#fff6c0,rgba(255,170,60,.7) 40%,transparent 70%)"></div>
<div style="position:absolute;left:124px;top:58px;width:2px;height:24px;background:#445"></div>
<div style="position:absolute;left:88px;top:73px;width:53px;height:14px;border:1px solid #c84848;color:#fff;font-size:11px;line-height:14px;text-align:center;letter-spacing:-0.3px">Challenge</div>
<div style="position:absolute;left:157px;top:48px;width:29px;height:78px;background:#fbfdff;background-image:repeating-linear-gradient(180deg,transparent 0 9px,#dfe7f2 9px 10px,transparent 10px 14px)"></div>
<div style="position:absolute;left:70px;top:104px;width:86px;height:3px;background:#c8dcf2"></div>
<div style="position:absolute;left:80px;top:107px;width:70px;height:16px;background:#f6faff;border:1px solid #dde8f4"></div>
<svg style="position:absolute;left:74px;top:86px" width="26" height="36" viewBox="0 0 26 36"><circle cx="6" cy="4" r="3" fill="#2a2a38"/><path d="M3 8 Q8 6 11 10 L13 18 L6 19 Z" fill="#3ab8b8"/><path d="M6 18 L20 22 L24 33 L21 34 L16 25 L7 23 Z" fill="#2e3440"/></svg>
<svg style="position:absolute;left:120px;top:82px" width="20" height="42" viewBox="0 0 20 42"><circle cx="10" cy="4" r="3" fill="#2a2a38"/><path d="M5 8 H15 L16 20 H4 Z" fill="#3a8ae0"/><path d="M5 20 H15 L14 40 H11 L10 28 L9 40 H6 Z" fill="#2e3440"/></svg>
<svg style="position:absolute;left:178px;top:97px" width="18" height="38" viewBox="0 0 18 38"><circle cx="9" cy="4" r="3" fill="#2a2a38"/><path d="M4 8 H14 L15 20 H3 Z" fill="#c8dcf0"/><path d="M4 20 H14 L15 36 H11 L9 26 L7 36 H3 Z" fill="#2e3440"/></svg>
<svg style="position:absolute;left:86px;top:0" width="16" height="14" viewBox="0 0 16 14"><circle cx="8" cy="3" r="2.5" fill="#2a2a38"/><path d="M2 13 Q3 6 8 6 Q13 6 14 13 Z" fill="#8cc8f0"/></svg>
</div>
<div class="ttl" style="left:1227px;top:956px">3分でわかる<br>CheckBack.pdf</div>
<svg class="keb" style="left:1453.5px;top:966px" width="10" height="28" viewBox="0 0 10 28">
<circle cx="5" cy="5.5" r="2.6" fill="none" stroke="#b7bfd6" stroke-width="1.5"/>
<circle cx="5" cy="14" r="2.6" fill="none" stroke="#b7bfd6" stroke-width="1.5"/>
<circle cx="5" cy="22.5" r="2.6" fill="none" stroke="#b7bfd6" stroke-width="1.5"/>
</svg>
<div class="bdg" style="left:1433px;top:1006px"><svg width="15" height="14" viewBox="0 0 15 14"><path d="M5 2.5 H10.5 A3.7 3.7 0 0 1 10.5 9.9 H7.5 L5.5 12.3 V9.8 H4.5 A3.7 3.7 0 0 1 3 2.9" fill="none" stroke="#1a84f5" stroke-width="1.4" stroke-linejoin="round" stroke-linecap="round"/><path d="M5.6 0.9 L4.3 2.5 L5.8 3.9" fill="none" stroke="#1a84f5" stroke-width="1.3" stroke-linecap="round" stroke-linejoin="round"/><circle cx="5" cy="6" r="0.9" fill="#1a84f5"/><circle cx="7.5" cy="6" r="0.9" fill="#1a84f5"/><circle cx="10" cy="6" r="0.9" fill="#1a84f5"/></svg><span>0</span></div>
<svg class="fold" style="left:1555px;top:820.5px" width="175" height="118" viewBox="0 0 175 118">
<path d="M0 8 Q0 0 8 0 H62 Q67 0 70 3 L81 14.5 V30 H0 Z" fill="#7cb9e6"/>
<rect x="0" y="14.5" width="175" height="103" rx="8" fill="#8dcdfc"/>
</svg>
<div class="ttl" style="left:1521px;top:956px">サービス紹介資料</div>
<svg class="keb" style="left:1747.5px;top:966px" width="10" height="28" viewBox="0 0 10 28">
<circle cx="5" cy="5.5" r="2.6" fill="none" stroke="#b7bfd6" stroke-width="1.5"/>
<circle cx="5" cy="14" r="2.6" fill="none" stroke="#b7bfd6" stroke-width="1.5"/>
<circle cx="5" cy="22.5" r="2.6" fill="none" stroke="#b7bfd6" stroke-width="1.5"/>
</svg>
<div class="bdg" style="left:1727px;top:1006px"><svg width="15" height="14" viewBox="0 0 15 14"><path d="M5 2.5 H10.5 A3.7 3.7 0 0 1 10.5 9.9 H7.5 L5.5 12.3 V9.8 H4.5 A3.7 3.7 0 0 1 3 2.9" fill="none" stroke="#1a84f5" stroke-width="1.4" stroke-linejoin="round" stroke-linecap="round"/><path d="M5.6 0.9 L4.3 2.5 L5.8 3.9" fill="none" stroke="#1a84f5" stroke-width="1.3" stroke-linecap="round" stroke-linejoin="round"/><circle cx="5" cy="6" r="0.9" fill="#1a84f5"/><circle cx="7.5" cy="6" r="0.9" fill="#1a84f5"/><circle cx="10" cy="6" r="0.9" fill="#1a84f5"/></svg><span>0</span></div>
<svg class="fold" style="left:85px;top:1076.0px" width="175" height="118" viewBox="0 0 175 118">
<path d="M0 8 Q0 0 8 0 H62 Q67 0 70 3 L81 14.5 V30 H0 Z" fill="#7cb9e6"/>
<rect x="0" y="14.5" width="175" height="103" rx="8" fill="#8dcdfc"/>
</svg>
<div class="abs" style="left:1529px;top:275px;width:348px;height:209px;background:#fafafa;border-radius:10px;box-shadow:0 3px 14px rgba(0,0,0,.13);z-index:5"></div>
<div class="abs" style="left:1540px;top:290px;font-size:16.5px;line-height:22px;color:#2f5f86;z-index:6;-webkit-text-stroke:0.35px #2f5f86">アップロード</div>
<div class="abs" style="left:1539px;top:333px;width:38px;height:39px;border-radius:6px;background:#e3f2fd;z-index:6"></div>
<svg class="abs" style="left:1546px;top:337px;z-index:7" width="26" height="31" viewBox="0 0 26 31"><path d="M16 28 H6 Q3 28 3 25 V5 Q3 2 6 2 H13 L19 8 V18" fill="none" stroke="#1a84f5" stroke-width="1.8" stroke-linejoin="round" stroke-linecap="round"/><path d="M13 2 V6 Q13 8 15 8 H19" fill="none" stroke="#1a84f5" stroke-width="1.8" stroke-linejoin="round"/><path d="M20 21 V23.5 M20 26 V28.5 M16.5 24.8 H19 M21 24.8 H23.5" stroke="#1a84f5" stroke-width="1.8" stroke-linecap="round"/></svg>
<div class="abs" style="left:1588px;top:342px;font-size:16.3px;line-height:22px;color:#222;z-index:6">ファイルをアップロード</div>
<div class="abs" style="left:1539px;top:382px;width:38px;height:39px;border-radius:6px;background:#e3f2fd;z-index:6"></div>
<svg class="abs" style="left:1543px;top:390px;z-index:7" width="32" height="26" viewBox="0 0 32 26"><path d="M19 21 H5 Q2 21 2 18 V4 Q2 1.5 4.5 1.5 H10 L13 5 H22.5 Q25 5 25 7.5 V13" fill="none" stroke="#1a84f5" stroke-width="1.8" stroke-linejoin="round" stroke-linecap="round"/><path d="M2 8 H14" stroke="#1a84f5" stroke-width="1.6"/><path d="M26 16 V18.5 M26 21 V23.5 M22.5 19.8 H25 M27 19.8 H29.5" stroke="#1a84f5" stroke-width="1.8" stroke-linecap="round"/></svg>
<div class="abs" style="left:1588px;top:391px;font-size:16.3px;line-height:22px;color:#222;z-index:6">フォルダを作成</div>
<div class="abs" style="left:1539px;top:432px;width:38px;height:39px;border-radius:6px;background:#e3f2fd;z-index:6"></div>
<svg class="abs" style="left:1543px;top:438px;z-index:7" width="32" height="26" viewBox="0 0 32 26"><path d="M14.8 7.4 H8.6 Q4.9 7.4 4.9 11 V17.5" fill="none" stroke="#1a84f5" stroke-width="1.8" stroke-linecap="round"/><path d="M24.2 16 V16.8 Q24.2 19.2 21.8 19.2 H5.5" fill="none" stroke="#1a84f5" stroke-width="1.8" stroke-linecap="round"/><path d="M2.3 23.2 L5.5 19.4 M2.3 23.2 H25" fill="none" stroke="#1a84f5" stroke-width="1.8" stroke-linecap="round" stroke-linejoin="round"/><rect x="23.3" y="1" width="4.6" height="9" rx="2.3" transform="rotate(45 25.6 5.5)" fill="none" stroke="#1a84f5" stroke-width="1.7"/><rect x="16.7" y="7" width="4.6" height="9" rx="2.3" transform="rotate(45 19 11.5)" fill="none" stroke="#1a84f5" stroke-width="1.7"/></svg>
<div class="abs" style="left:1587px;top:441px;font-size:16.3px;line-height:22px;color:#222;z-index:6">Webページをアップロード</div>
<div class="red" style="left:1524px;top:421px;width:353px;height:63px"></div>

<div class="edge" style="left:0"></div><div class="edge" style="left:1909px"></div></div></body></html>
